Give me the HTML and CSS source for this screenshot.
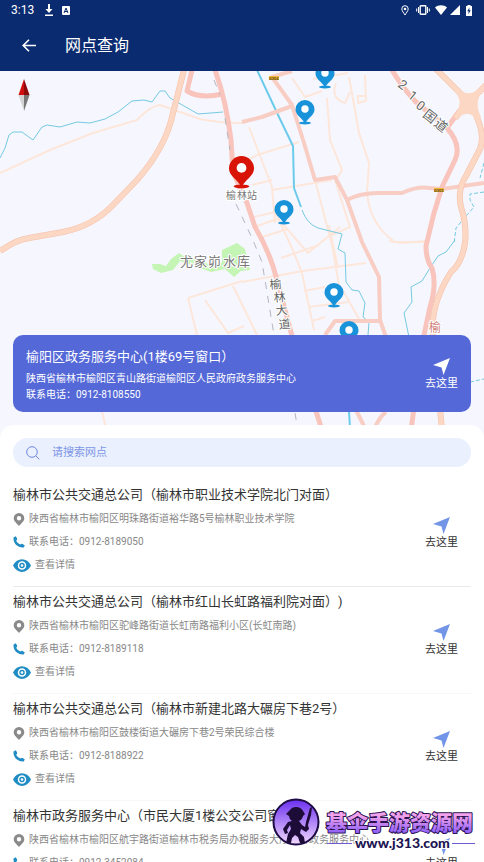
FILE: index.html
```html
<!DOCTYPE html>
<html lang="zh-CN">
<head>
    <meta charset="UTF-8">
    <meta name="viewport" content="width=device-width, initial-scale=1.0">
    <title>网点查询</title>
    <link rel="stylesheet" href="styles.css">
</head>
<body>
    <!-- shared icons -->
    <svg class="sprite" aria-hidden="true">
        <symbol id="send" viewBox="0 0 17 17"><path d="M17 0 L10.500 17 L8.500 9.500 L0 7 Z" fill="currentColor"/></symbol>
        <symbol id="place" viewBox="0 0 11 13"><path fill="#8a8a8a" fill-rule="evenodd" d="M5.500 0 A5.300 5.300 0 0 1 10.800 5.300 C10.800 8.500 7.500 10.500 5.500 13 C3.500 10.500 .2 8.500 .2 5.300 A5.300 5.300 0 0 1 5.500 0 Z M5.500 3 A2.200 2.200 0 1 0 5.500 7.400 A2.200 2.200 0 1 0 5.500 3 Z"/></symbol>
        <symbol id="phone" viewBox="0 0 12 12"><path fill="#1f8cc4" d="M.5 1.500 L2.700 .3 C3.500 1.200 4.100 2.400 4.200 3.500 L3.200 4.800 C4.200 6.600 5.500 7.700 7.400 8.600 L8.700 7.700 C9.900 7.900 11 8.600 11.800 9.500 L10.700 11.500 C5 12 0 7.500 .5 1.500 Z"/></symbol>
        <symbol id="eye" viewBox="0 0 18 13"><path fill="#1f8cc4" d="M0 6.500 C4-2 14-2 18 6.500 C14 15 4 15 0 6.500 Z"/><circle cx="9" cy="6.500" r="3.500" fill="none" stroke="#fff" stroke-width="1.500"/><circle cx="9" cy="6.500" r="1.300" fill="#fff"/></symbol>
        <symbol id="pin" viewBox="0 0 20 25"><ellipse cx="10" cy="23" rx="6" ry="1.500" fill="currentColor"/><path fill="currentColor" d="M10 0 A9.500 9.500 0 0 1 19.500 9.500 C19.500 15 13 18 10 23.500 C7 18 .5 15 .5 9.500 A9.500 9.500 0 0 1 10 0 Z"/><circle cx="10" cy="9" r="3.700" fill="#fff"/></symbol>
    </svg>

    <header class="header">
        <div class="status-bar">
            <span class="time">3:13</span>
            <svg width="10" height="12" viewBox="0 0 10 12" fill="#fff"><path d="M4 0 H6 V5 H8.500 L5 9 L1.500 5 H4 Z M1 10.500 H9 V12 H1 Z"/></svg>
            <svg class="box-icon" width="8" height="9" viewBox="0 0 8 9"><rect width="8" height="9" rx="1" fill="#fff"/><path d="M2 7 L4 2 L6 7 M2.800 5.500 H5.200" fill="none" stroke="#0a2b6f"/></svg>
            <div class="status-icons">
                <svg width="8" height="11" viewBox="0 0 8 11"><path d="M4 .7 A3.200 3.200 0 0 1 7.200 3.900 C7.200 6 5 8 4 10 C3 8 .8 6 .8 3.900 A3.200 3.200 0 0 1 4 .7 Z" fill="none" stroke="#fff"/><circle cx="4" cy="4" r="1.300" fill="#fff"/></svg>
                <svg width="14" height="10" viewBox="0 0 14 10" stroke="#fff" fill="none"><rect x="4.200" y=".7" width="5.600" height="8.600" rx=".6" stroke-width="1.400"/><path d="M2.500 2 V8 M.7 3.500 V6.500 M11.500 2 V8 M13.300 3.500 V6.500"/></svg>
                <svg width="12" height="10" viewBox="0 0 12 10"><path d="M0 2.500 C3-.5 9-.5 12 2.500 L6 10 Z" fill="#fff"/></svg>
                <svg width="10" height="10" viewBox="0 0 10 10"><path d="M10 0 V10 H0 Z" fill="#fff"/></svg>
                <svg class="battery" width="6" height="11" viewBox="0 0 6 11"><path d="M1.500 0 H4.500 V1 H6 V11 H0 V1 H1.500 Z" fill="#fff"/><path d="M3.500 2.500 L1.200 6.200 H2.700 L2.300 9.300 L4.800 5.300 H3.300 Z" fill="#0a2b6f"/></svg>
            </div>
        </div>
        <div class="app-bar">
            <button class="back" aria-label="返回">
                <svg width="14" height="13" viewBox="0 0 14 13" fill="none" stroke="#fff" stroke-width="1.600"><path d="M14 6.500 H1.500 M7 .7 L1.200 6.500 L7 12.300"/></svg>
            </button>
            <h1>网点查询</h1>
        </div>
    </header>

    <section class="map">
        <svg class="map-canvas" viewBox="0 71 484 370" preserveAspectRatio="xMidYMin slice">
            <!-- reservoir -->
            <path class="park" d="M152 264 L160 264 L166 266 L171 259 L179 253 L185 257 L196 259 L208 264 L222 263 L222 250 L237 243 L245 249 L250 270 L241 271 L234 277 L225 269 L211 272 L195 266 L180 261 L173 270 L161 273 L153 269 Z"/>

            <!-- small streets -->
            <g class="street">
                <path d="M0 173 L50 150 L93 133 L137 120 Q150 106 160 105 L200 119 Q220 123 242 123"/>
                <path d="M327 98 L330 140 L342 170 L337 178"/>
                <path d="M349 77 L359 133 L369 163 L367 193 Q370 225 395 242 L427 242"/>
                <path d="M292 78 L305 97 L322 91 M313 79 L348 73 M365 75 L366 101 L358 103 V96 H365 M336 83 Q330 98 345 103 L350 92"/>
                <path d="M249 127 L272 187 L275 223 M242 163 L257 155 L299 142 M252 185 L272 180 M272 190 L332 180"/>
                <path d="M315 180 L332 245 L339 285 M335 180 L350 227 L332 235"/>
                <path d="M254 217 L275 212 M257 226 L280 218 M262 237 L288 229 M275 212 L292 248 L302 273 L314 330"/>
                <path d="M242 282 L303 271 L366 263 M282 223 L308 253 L340 227 M281 258 L319 245 M329 225 L338 268"/>
                <path d="M304 291 L325 287 M309 307 L348 302 M312 321 L325 317 M342 289 L359 319"/>
                <path d="M188 298 L242 281 M188 298 L197 335 M205 300 L228 333 L244 326 M233 286 L257 335"/>
                <path d="M389 241 L402 243 L425 241 M101 408 L106 428"/>
            </g>

            <!-- rivers -->
            <g class="river">
                <path d="M0 158 L5 148 L9 135 L13 132 H22 L33 140 L42 127 L47 125 L60 127 L77 122 L90 123 L105 119 L118 112 L132 101 L144 100 L152 102 L160 91 L165 91 L170 98 L184 106 L198 114 L223 112"/>
                <path d="M302 210 Q307 224 318 228 L342 234 L338 249 L345 253 L346 282 L352 290 L359 291 L365 303 L363 317 L369 322 L368 335"/>
                <path d="M455 240 L446 252 L438 256 L430 268 L422 281 L411 287 L412 302 L404 313 L409 337"/>
                <path class="faint" d="M484 163 L480 178 M484 192 L470 194 V200 L474 207 L466 216 L456 228 L454 244"/>
                <path class="faint" d="M470 382 L484 379"/>
                <path class="wide" d="M257 70 L279 117 L293 146 L294 188 L301 207 M349 411 L350 428"/>
            </g>

            <!-- main roads -->
            <g class="road">
                <path class="thick" d="M192 70 L187 91 Q200 99 222 94"/>
                <path class="thick" d="M215 70 Q226 100 231 140 L233 172 L247 203 L255 227 Q270 252 277 280 L292 336 L322 430"/>
                <path d="M242 122 L262 117 L292 106 M292 71 L272 77 L292 105 L304 143 L315 180 L335 177 L347 200 L362 242 L379 277 L380 320 L387 340"/>
                <path d="M347 200 Q360 193 378 193 L402 193 Q417 186 430 188 L442 189 L484 183"/>
                <path d="M325 335 L335 321 H381"/>
                <path class="thick" d="M392 70 Q402 87 415 101 L447 128 Q462 145 455 160 L442 187 L434 213 L426 246 Q426 260 432 268 Q437 285 430 307 L424 335 L411 430"/>
                <path class="thick" d="M447 128 L460 110"/>
                <path d="M356 410 L366 430 M386 412 Q379 417 374 430"/>
            </g>

            <!-- expressways -->
            <path class="highway-edge" d="M0 251 Q18 239 29 238 L63 232 Q93 226 113 205 L137 180 Q166 147 173 113 L184 70 M435 68 L469 102 L486 85 M469 102 L455 118 M469 102 Q487 132 480 149 L466 176 Q457 190 461 207 Q467 225 465 243 Q462 263 451 272 Q430 305 433 335 L442 430"/>
            <path class="highway" d="M0 251 Q18 239 29 238 L63 232 Q93 226 113 205 L137 180 Q166 147 173 113 L184 70 M435 68 L469 102 L486 85 M469 102 L455 118 M469 102 Q487 132 480 149 L466 176 Q457 190 461 207 Q467 225 465 243 Q462 263 451 272 Q430 305 433 335 L442 430"/>
            <path class="junction" d="M456 87 Q469 100 482 86 L484 90 Q473 101 481 117 L477 121 Q470 109 459 117 L456 113 Q464 101 454 91 Z"/>

            <path class="rail" d="M214 80 L220 95 M225 118 L230 150 M236 204 L252 238 L262 262 L274 335 M295 413 L297 425"/>

            <!-- road numbers -->
            <rect class="shield" x="269" y="76" width="10" height="4"/>
            <text class="shield-text" x="269" y="80">G204</text>
            <rect class="shield" x="434" y="188" width="10" height="4"/>
            <text class="shield-text" x="434" y="192">G303</text>

            <!-- labels -->
            <text class="label" x="226 237 247" y="199" font-size="10">榆林站</text>
            <text class="label" x="180 194 208 223 237" y="266" font-size="13">尤家峁水库</text>
            <text class="label dark" x="270 274 276 279" y="289 302 315 329" rotate="-5" font-size="12">榆林大道</text>
            <text class="label dark" x="397 407 415 422 433" y="86 97 107 116 125" rotate="38" font-size="13">210国道</text>
            <text class="label road-name" x="429" y="332" font-size="12">榆</text>

            <!-- outlets -->
            <g color="#1893d9">
                <use href="#pin" x="315" y="64" width="20" height="25"/>
                <use href="#pin" x="295" y="100" width="20" height="25"/>
                <use href="#pin" x="274" y="200" width="20" height="25"/>
                <use href="#pin" x="324" y="283" width="20" height="25"/>
                <use href="#pin" x="339" y="321" width="20" height="25"/>
            </g>
            <use href="#pin" x="228" y="156" width="27" height="33" color="#d81406"/>

            <!-- compass -->
            <path d="M24 79 L18.500 95 H24 Z" fill="#d01010"/>
            <path d="M24 79 L29.500 95 H24 Z" fill="#8d0a0a"/>
            <path d="M24 111 L18.500 95 H24 Z" fill="#d2d2d2"/>
            <path d="M24 111 L29.500 95 H24 Z" fill="#777"/>
        </svg>

        <div class="selected">
            <div class="selected-info">
                <h2>榆阳区政务服务中心(1楼69号窗口）</h2>
                <p>陕西省榆林市榆阳区青山路街道榆阳区人民政府政务服务中心</p>
                <p>联系电话：0912-8108550</p>
            </div>
            <button class="go"><svg width="17" height="17"><use href="#send"/></svg>去这里</button>
        </div>
    </section>

    <main class="sheet">
        <label class="search">
            <svg width="14" height="14" viewBox="0 0 14 14" fill="none" stroke="#6f88d8"><circle cx="6" cy="6" r="5.300"/><path d="M9.800 9.800 L13.300 13.300"/></svg>
            <input type="text" placeholder="请搜索网点" aria-label="请搜索网点">
        </label>

        <ul class="list">
            <li class="item">
                <div class="info">
                    <h3>榆林市公共交通总公司（榆林市职业技术学院北门对面）</h3>
                    <p><svg width="12" height="13"><use href="#place"/></svg>陕西省榆林市榆阳区明珠路街道裕华路5号榆林职业技术学院</p>
                    <p><svg width="12" height="12"><use href="#phone"/></svg>联系电话：0912-8189050</p>
                    <a href="#"><svg width="18" height="13"><use href="#eye"/></svg>查看详情</a>
                </div>
                <button class="go"><svg width="17" height="17"><use href="#send"/></svg>去这里</button>
            </li>
            <li class="item">
                <div class="info">
                    <h3>榆林市公共交通总公司（榆林市红山长虹路福利院对面）)</h3>
                    <p><svg width="12" height="13"><use href="#place"/></svg>陕西省榆林市榆阳区驼峰路街道长虹南路福利小区(长虹南路)</p>
                    <p><svg width="12" height="12"><use href="#phone"/></svg>联系电话：0912-8189118</p>
                    <a href="#"><svg width="18" height="13"><use href="#eye"/></svg>查看详情</a>
                </div>
                <button class="go"><svg width="17" height="17"><use href="#send"/></svg>去这里</button>
            </li>
            <li class="item">
                <div class="info">
                    <h3>榆林市公共交通总公司（榆林市新建北路大碾房下巷2号）</h3>
                    <p><svg width="12" height="13"><use href="#place"/></svg>陕西省榆林市榆阳区鼓楼街道大碾房下巷2号荣民综合楼</p>
                    <p><svg width="12" height="12"><use href="#phone"/></svg>联系电话：0912-8188922</p>
                    <a href="#"><svg width="18" height="13"><use href="#eye"/></svg>查看详情</a>
                </div>
                <button class="go"><svg width="17" height="17"><use href="#send"/></svg>去这里</button>
            </li>
            <li class="item">
                <div class="info">
                    <h3>榆林市政务服务中心（市民大厦1楼公交公司窗口）</h3>
                    <p><svg width="12" height="13"><use href="#place"/></svg>陕西省榆林市榆阳区航宇路街道榆林市税务局办税服务大厅榆林政务服务中心</p>
                    <p><svg width="12" height="12"><use href="#phone"/></svg>联系电话：0912-3452084</p>
                    <a href="#"><svg width="18" height="13"><use href="#eye"/></svg>查看详情</a>
                </div>
                <button class="go"><svg width="17" height="17"><use href="#send"/></svg>去这里</button>
            </li>
        </ul>
    </main>

    <svg class="watermark" width="206" height="52" viewBox="0 0 206 52">
        <defs>
            <linearGradient id="disc" x1="0" y1="0" x2="0" y2="1"><stop offset="0" stop-color="#6a2fee"/><stop offset="1" stop-color="#f3d9ff"/></linearGradient>
            <linearGradient id="name" x1="0" y1="0" x2="0" y2="1"><stop offset=".2" stop-color="#f2a2ea"/><stop offset=".9" stop-color="#8f60f8"/></linearGradient>
        </defs>
        <circle cx="24" cy="26" r="22.500" fill="url(#disc)" stroke="#1d0b45" stroke-width="2"/>
        <path fill="#1d0b38" d="M18 14 Q20 11 24 11 Q29 11 31 15 L33 18 L31 20 Q30 24 27 25 L30 29 L33 31 L34 26 L38 12 L40 11 L39 19 L36 29 L37 33 L34 36 L29 33 L28 37 L32 41 L33 47 H28 L26 41 L23 39 L20 42 L19 47 H14 L16 38 L19 33 L18 29 L15 34 L16 37 L13 38 L11 33 L16 26 L20 25 Q17 23 17 20 L14 18 Z"/>
        <text class="mark-name" x="54" y="34">基伞手游资源网</text>
        <path d="M55 47.500 H80 M180 47.500 H203" stroke="#6d5bd0"/>
        <text class="mark-url" x="83" y="52">www.j313.com</text>
    </svg>
</body>
</html>
```
FILE: styles.css
```css
* {
    box-sizing: border-box;
}

body {
    margin: 0;
    height: 100vh;
    display: flex;
    flex-direction: column;
    position: relative;
    overflow: hidden;
    background-color: #fff;
    font-family: Roboto, "Noto Sans CJK SC", sans-serif;
    text-spacing-trim: space-all;
    color: #333;
}

h1, h2, h3, p, ul {
    margin: 0;
    padding: 0;
    font-weight: normal;
}

button {
    border: none;
    background: none;
    padding: 0;
    font-family: inherit;
    color: inherit;
    cursor: pointer;
}

svg {
    display: block;
    flex-shrink: 0;
}

.sprite {
    position: absolute;
    width: 0;
    height: 0;
}

/* header */
.header {
    flex-shrink: 0;
    background-color: #0a2b6f;
    color: #fff;
}

.status-bar {
    display: flex;
    align-items: center;
    height: 20px;
    padding: 0 12px 0 11px;
}

.time {
    margin-right: 10px;
    font-size: 12px;
    line-height: 20px;
}

.box-icon {
    margin-left: 8px;
}

.status-icons {
    display: flex;
    align-items: center;
    gap: 3px;
    margin-left: auto;
}

.status-icons svg:first-child {
    margin-right: 4px;
}

.status-icons svg:nth-child(2) {
    margin-right: 2px;
}

.battery {
    margin-left: 3px;
}

.app-bar {
    display: flex;
    align-items: center;
    height: 51px;
    padding: 0 22px;
}

.back {
    margin-right: 29px;
}

.app-bar h1 {
    font-size: 16px;
    line-height: 24px;
}

/* map */
.map {
    flex-shrink: 0;
    position: relative;
    height: 370px;
    background-color: #f6f7fe;
}

.map-canvas {
    width: 100%;
    height: 100%;
}

.map-canvas path {
    stroke-linejoin: round;
}

.map-canvas .park {
    fill: #c5f5b5;
}

.street, .river, .road, .highway, .highway-edge, .rail {
    fill: none;
}

.street {
    stroke: #fde6da;
    stroke-width: 2;
}

.river {
    stroke: #75c9e2;
    stroke-width: 1;
}

.river .faint {
    stroke-dasharray: 4 2;
}

.river .wide {
    stroke: #6ccbea;
    stroke-width: 2;
}

.road {
    stroke: #f8cdc4;
    stroke-width: 4;
}

.road .thick {
    stroke: #f8c4bc;
    stroke-width: 5;
}

.highway-edge {
    stroke: #f4bfa8;
    stroke-width: 6;
}

.highway {
    stroke: #fcd7c3;
    stroke-width: 5;
}

.junction {
    fill: #fcd7c3;
}

.rail {
    stroke: #b5b5bd;
    stroke-dasharray: 7 7;
}

.shield {
    fill: #f0b93a;
}

.shield-text {
    font-size: 4px;
    font-weight: bold;
    fill: #5d4716;
}

.label {
    fill: #777;
    stroke: #fff;
    stroke-width: 2px;
    paint-order: stroke;
}

.label.dark {
    fill: #666;
}

.label.road-name {
    fill: #d08078;
}

.selected {
    position: absolute;
    left: 13px;
    right: 13px;
    bottom: 29px;
    display: flex;
    align-items: center;
    padding: 12px 13px 9px;
    border-radius: 10px;
    background-color: #5468d8;
    color: #fff;
}

.selected-info {
    flex: 1;
}

.selected h2 {
    margin-bottom: 4px;
    font-size: 13px;
    line-height: 20px;
}

.selected p {
    font-size: 10px;
    line-height: 16px;
}

.go {
    display: flex;
    flex-direction: column;
    align-items: center;
    gap: 1px;
    font-size: 11px;
    line-height: 16px;
}

/* list */
.sheet {
    flex: 1;
    min-height: 0;
    position: relative;
    margin-top: -16px;
    padding: 13px 13px 0;
    border-radius: 14px 14px 0 0;
    background-color: #fff;
    overflow: hidden;
}

.search {
    display: flex;
    align-items: center;
    height: 29px;
    margin-bottom: 13px;
    padding: 0 13px;
    border-radius: 15px;
    background-color: #eaf0fe;
}

.search input {
    flex: 1;
    margin-left: 12px;
    padding: 0;
    border: none;
    outline: none;
    background: none;
    font-family: inherit;
    font-size: 11px;
}

.search input::placeholder {
    color: #7e96e6;
}

.list {
    list-style: none;
}

.item {
    display: flex;
    align-items: flex-start;
    padding: 5px 13px 12px 0;
    border-bottom: 1px solid #f7f7f7;
}

.item:first-child {
    border-bottom-color: #eaeaea;
}

.info {
    flex: 1;
    min-width: 0;
    white-space: nowrap;
}

.info h3 {
    margin-bottom: 6px;
    font-size: 13px;
    line-height: 20px;
}

.info p, .info a {
    display: flex;
    align-items: center;
    gap: 4px;
    margin-bottom: 7px;
    font-size: 10px;
    line-height: 16px;
    color: #888;
    text-decoration: none;
}

.info a {
    margin-bottom: 1px;
}

.item .go {
    margin-top: 32px;
}

.item .go svg {
    color: #7295e8;
}

/* watermark */
.watermark {
    position: absolute;
    right: 6px;
    bottom: 14px;
    overflow: visible;
}

.mark-name {
    font-size: 21px;
    font-weight: 900;
    fill: url(#name);
    stroke: #2a124f;
    stroke-width: 2px;
    stroke-linejoin: round;
    paint-order: stroke;
}

.mark-url {
    font-family: Lato, sans-serif;
    font-size: 14px;
    font-weight: 900;
    fill: #201552;
    stroke: #fff;
    stroke-width: 2px;
    paint-order: stroke;
}
```
